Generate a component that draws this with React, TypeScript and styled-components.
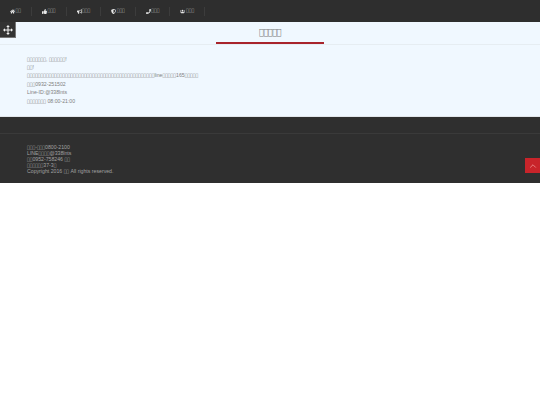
import React from "react";
import styled, { createGlobalStyle } from "styled-components";
import { FaHome, FaThumbsUp, FaBullhorn, FaShieldAlt, FaPhone, FaUsers } from "react-icons/fa";
import { FiChevronUp } from "react-icons/fi";

const Tofu = styled.span`font-family: "DejaVu Sans", sans-serif; font-size: 0.87em; line-height: 0;`;
const T = ({ n }: { n: number }) => <Tofu>{"\uE000".repeat(n)}</Tofu>;

const Global = createGlobalStyle`
  html, body { margin: 0; padding: 0; background: #fff; }
  body { font-family: "Liberation Sans", Arial, sans-serif; }
`;
const Page = styled.div`width: 540px; min-height: 405px; display: flex; flex-direction: column;`;
const Nav = styled.nav`height: 22px; background: #2e2e2e; display: flex; align-items: center;`;
const NavItem = styled.a`
  display: flex; align-items: center; gap: 0.5px; height: 9px; padding: 0 10px;
  border-right: 1px solid #3c3c3c; color: #aaa; font-size: 5.2px; white-space: nowrap;
  svg { height: 5px; width: auto; color: #e8e8e8; flex: none; }
`;
const Main = styled.main`position: relative; height: 95px; background: #f0f8ff; border-bottom: 1px solid #e2e6ea; box-sizing: border-box;`;
const Handle = styled.div`
  position: absolute; left: 0; top: 0; width: 16px; height: 16px; background: #333;
  border-right: 1px solid #777; border-bottom: 1px solid #777; box-sizing: border-box;
  display: flex; align-items: center; justify-content: center; color: #f2f2f2;
  svg { width: 10px; height: 10px; }
`;
const TitleBar = styled.div`height: 22px; border-bottom: 1px solid #e6edf2; display: flex; justify-content: center;`;
const Title = styled.h1`
  margin: 0; width: 108px; height: 22px; box-sizing: border-box; border-bottom: 2px solid #a8242c;
  text-align: center; font-size: 9.6px; letter-spacing: -0.6px; line-height: 20px; font-weight: 400; color: #7a7a7a;
`;
const Body = styled.div`padding: 9.5px 27px 0; font-size: 5.2px; line-height: 8.4px; color: #808080;`;
const Footer = styled.footer`position: relative; height: 66px; background: #2f2f2f; box-sizing: border-box;`;
const FooterLine = styled.div`height: 17px; border-bottom: 1px solid #3a3a3a; box-sizing: border-box;`;
const FooterText = styled.div`padding: 10px 27px 0; font-size: 5.2px; line-height: 6px; color: #a2a2a2;`;
const BackTop = styled.a`
  position: absolute; right: 0; top: 41px; width: 15px; height: 15px; background: #c8242a;
  display: flex; align-items: center; justify-content: center; color: #f09090;
  svg { width: 10px; height: 10px; }
`;

const nav: [React.ReactNode, number][] = [
  [<FaHome />, 2], [<FaThumbsUp />, 3], [<FaBullhorn />, 3], [<FaShieldAlt />, 3], [<FaPhone />, 3], [<FaUsers />, 3],
];

const MoveIcon = () => (
  <svg viewBox="0 0 20 20" fill="currentColor" stroke="none">
    <path d="M9 4h2v5h5v2h-5v5H9v-5H4V9h5z" />
    <path d="M10 0l3.5 4h-7zM10 20l-3.5-4h7zM0 10l4-3.5v7zM20 10l-4 3.5v-7z" />
  </svg>
);

export default function App() {
  return (
    <Page>
      <Global />
      <Nav>{nav.map(([icon, n], i) => <NavItem key={i}>{icon}<T n={n} /></NavItem>)}</Nav>
      <Main>
        <Handle><MoveIcon /></Handle>
        <TitleBar><Title><T n={5} /></Title></TitleBar>
        <Body>
          <div><T n={7} />, <T n={6} />!</div>
          <div><T n={2} />!</div>
          <div><T n={47} />line<T n={5} />165<T n={5} /></div>
          <div><T n={3} />0932-251502</div>
          <div>Line-ID:@338lnts</div>
          <div><T n={7} /> 08:00-21:00</div>
        </Body>
      </Main>
      <Footer>
        <FooterLine />
        <FooterText>
          <div><T n={3} />-<T n={3} />0800-2100</div>
          <div>LINE<T n={4} />@338lnts</div>
          <div><T n={2} />0952-758246 <T n={2} /></div>
          <div><T n={6} />37-3<T n={1} /></div>
          <div>Copyright 2016 <T n={2} /> All rights reserved.</div>
        </FooterText>
        <BackTop><FiChevronUp /></BackTop>
      </Footer>
    </Page>
  );
}
